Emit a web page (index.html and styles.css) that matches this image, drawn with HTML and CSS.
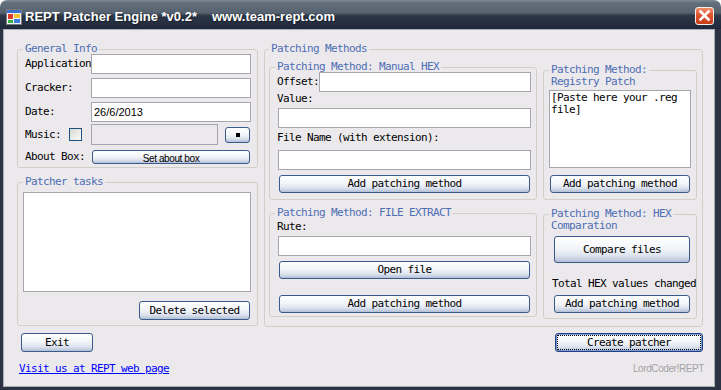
FILE: index.html
```html
<!DOCTYPE html>
<html lang="en">
<head>
  <meta charset="UTF-8" />
  <title>REPT Patcher Engine *v0.2*</title>
  <link rel="stylesheet" href="styles.css">
</head>
<body>
<div class="window">
  <div class="titlebar">
    <svg class="app-icon" width="16" height="16" viewBox="0 0 16 16">
      <rect x="0.5" y="0.5" width="15" height="15" fill="#f4f4f4" stroke="#7a7a7a"/>
      <rect x="1" y="1" width="14" height="3" fill="#3a6fd0"/>
      <rect x="2" y="5" width="5" height="5" fill="#e03a2a"/>
      <rect x="8" y="5" width="6" height="4" fill="#f2c232"/>
      <rect x="8" y="10" width="6" height="4" fill="#3d7fe0"/>
      <rect x="2" y="11" width="5" height="3" fill="#3cb04a"/>
    </svg>
    <span class="title">REPT Patcher Engine *v0.2*</span>
    <span class="title site">www.team-rept.com</span>
    <span class="close-btn">
      <svg width="17" height="16" viewBox="0 0 17 16">
        <path d="M4.5 3.5 L12.5 11.5 M12.5 3.5 L4.5 11.5" stroke="#fff" stroke-width="2.6" stroke-linecap="square" fill="none"/>
      </svg>
    </span>
  </div>

  <div class="frame">
    <div class="client">
      <div class="panels">
        <div class="left-col">
          <div class="group general">
            <div class="group-title">General Info</div>
            <div class="row"><span class="lbl">Application</span><input class="textbox" type="text"></div>
            <div class="row"><span class="lbl">Cracker:</span><input class="textbox" type="text"></div>
            <div class="row"><span class="lbl">Date:</span><input class="textbox" type="text" value="26/6/2013"></div>
            <div class="row music">
              <span class="lbl-short">Music:</span>
              <span class="check"></span>
              <input class="textbox off" type="text" disabled>
              <button class="btn btn-dot"><span class="dot"></span></button>
            </div>
            <div class="row about"><span class="lbl">About Box:</span><button class="btn btn-about">Set about box</button></div>
          </div>

          <div class="group tasks">
            <div class="group-title">Patcher tasks</div>
            <div class="listbox"></div>
            <button class="btn btn-delete">Delete selected</button>
          </div>
        </div>

        <div class="group methods">
          <div class="group-title">Patching Methods</div>
          <div class="methods-grid">
            <div class="group hex-manual">
              <div class="group-title">Patching Method: Manual HEX</div>
              <div class="row offset"><span class="lbl-short">Offset:</span><input class="textbox" type="text"></div>
              <div class="field-lbl value-lbl">Value:</div>
              <input class="textbox wide" type="text">
              <div class="field-lbl file-lbl">File Name (with extension):</div>
              <input class="textbox wide file-box" type="text">
              <button class="btn btn-full add-1">Add patching method</button>
            </div>

            <div class="group registry">
              <div class="group-title">Patching Method:<br>Registry Patch</div>
              <textarea class="regbox">[Paste here your .reg file]</textarea>
              <button class="btn btn-full add-2">Add patching method</button>
            </div>

            <div class="group extract">
              <div class="group-title">Patching Method: FILE EXTRACT</div>
              <div class="field-lbl rute-lbl">Rute:</div>
              <input class="textbox wide rute-box" type="text">
              <button class="btn btn-full open-btn">Open file</button>
              <button class="btn btn-full add-3">Add patching method</button>
            </div>

            <div class="group compare">
              <div class="group-title">Patching Method: HEX<br>Comparation</div>
              <button class="btn btn-compare">Compare files</button>
              <div class="field-lbl total-lbl">Total HEX values changed</div>
              <button class="btn btn-compare-add">Add patching method</button>
            </div>
          </div>
        </div>
      </div>

      <div class="actions">
        <button class="btn btn-exit">Exit</button>
        <button class="btn btn-create">Create patcher</button>
      </div>

      <div class="footer-row">
        <a class="site-link" href="#">Visit us at REPT web page</a>
        <span class="credit">LordCoder!REPT</span>
      </div>
    </div>
  </div>
</div>
</body>
</html>
```

FILE: styles.css
```css
* {
  box-sizing: border-box;
}

body {
  margin: 0;
  background: #fff;
  font-family: "DejaVu Sans Mono", "Liberation Mono", monospace;
  font-size: 11px;
  line-height: 12px;
  letter-spacing: -0.62px;
  color: #000;
}

.window {
  width: 721px;
  height: 390px;
  display: flex;
  flex-direction: column;
}

/* title bar */
.titlebar {
  flex: none;
  height: 29px;
  display: flex;
  align-items: center;
  padding: 4px 0 0 6px;
  border-radius: 7px 7px 0 0;
  background: linear-gradient(#7f8a96 0, #63707c 10%, #56626f 44%, #2d3747 54%, #1f283a 100%);
  color: #fff;
  font-family: "Liberation Sans", Arial, sans-serif;
  font-weight: bold;
  font-size: 13px;
  line-height: 15px;
  letter-spacing: 0;
  text-shadow: 1px 1px 0 rgba(0, 0, 0, 0.4);
}

.app-icon {
  margin-right: 3px;
}

.title {
  white-space: nowrap;
}

.site {
  margin-left: 15px;
}

.close-btn {
  margin: -2px 7px 0 auto;
  width: 19px;
  height: 18px;
  display: flex;
  align-items: center;
  justify-content: center;
  border: 1px solid #f4f0ee;
  border-radius: 3px;
  background: linear-gradient(#f0906c, #e0542e 45%, #c83b17);
}

/* window frame + client */
.frame {
  flex: 1;
  background: #2b3342;
  padding: 0 6px 3px 3px;
}

.client {
  height: 100%;
  border: 1px solid #a9aeb6;
  background: #ece9ed;
  padding: 19px 0 0 13px;
}

.panels {
  display: grid;
  grid-template-columns: 241px 439px;
  column-gap: 6px;
  align-items: start;
}

.left-col {
  display: flex;
  flex-direction: column;
  gap: 14px;
}

/* group boxes: the title sits over the top border */
.group {
  border: 1px solid #d2d0c6;
  border-radius: 3px;
}

.group-title {
  display: table;
  margin: -7px 0 -5px 0;
  padding: 0 2px;
  background: #ece9ed;
  color: #4d6db4;
  white-space: nowrap;
}

.general {
  padding: 0 6px 3px 7px;
}

.general .group-title {
  margin-left: -2px;
  margin-bottom: -1px;
}

.tasks {
  padding: 0 6px 5px 5px;
  display: flex;
  flex-direction: column;
}

.tasks .group-title {
  margin-bottom: 4px;
  align-self: flex-start;
}

.methods {
  padding: 0 5px 7px 4px;
}

.methods > .group-title {
  margin-bottom: 12px;
}

.methods-grid {
  display: grid;
  grid-template-columns: 268px 154px;
  column-gap: 6px;
  row-gap: 13px;
  align-items: start;
}

.hex-manual,
.extract {
  padding: 0 5px 6px 8px;
  display: flex;
  flex-direction: column;
}

.hex-manual .group-title,
.extract .group-title {
  margin-left: -3px;
  align-self: flex-start;
}

.hex-manual .group-title {
  margin-bottom: -1px;
}

.extract {
  padding-bottom: 3px;
}

.registry,
.compare {
  padding: 0 5px 6px 5px;
  display: flex;
  flex-direction: column;
}

.registry .group-title,
.compare .group-title {
  align-self: flex-start;
}

.registry {
  margin-top: 3px;
}

.compare {
  margin-top: 1px;
  padding-bottom: 5px;
}

/* rows and labels */
.row {
  display: flex;
  align-items: center;
  height: 20px;
}

.row + .row {
  margin-top: 4px;
}

.lbl {
  width: 66px;
  flex: none;
  overflow: hidden;
  white-space: nowrap;
}

.lbl-short {
  flex: none;
  white-space: nowrap;
}

.field-lbl {
  white-space: nowrap;
}

.textbox {
  height: 20px;
  flex: 1;
  min-width: 0;
  border: 1px solid #a7a6aa;
  background: #fff;
  padding: 0 2px;
  margin: 0;
  font-family: "Liberation Sans", Arial, sans-serif;
  font-size: 11px;
  letter-spacing: 0;
  color: #000;
  outline: none;
}

.textbox.off {
  flex: none;
  width: 127px;
  height: 21px;
  margin-left: 9px;
  background: transparent;
}

.music.row {
  margin-top: 2px;
  height: 21px;
}

.check {
  width: 13px;
  height: 13px;
  margin-left: 8px;
  border: 1px solid #1c5180;
  background: linear-gradient(135deg, #d8d8d2 0%, #fbfbfa 100%);
}

.about.row {
  margin-top: 5px;
  height: 14px;
}

.listbox {
  height: 100px;
  border: 1px solid #a7a6aa;
  background: #fff;
}

.offset .lbl-short {
  margin-left: -1px;
}

.value-lbl {
  margin: 1px 0 0 -1px;
}

.wide {
  flex: none;
  width: 100%;
  margin-top: 3px;
}

.file-lbl {
  margin: 4px 0 0 -1px;
}

.file-box {
  margin-top: 6px;
}

.rute-lbl {
  margin: 7px 0 0 -1px;
}

.rute-box {
  margin-top: 3px;
}

.regbox {
  margin-top: 7px;
  height: 78px;
  width: 100%;
  resize: none;
  overflow: hidden;
  border: 1px solid #a7a6aa;
  background: #fff;
  padding: 1px;
  font: inherit;
  letter-spacing: inherit;
  color: #000;
  outline: none;
}

.total-lbl {
  margin: 15px 0 0 3px;
}

/* buttons */
.btn {
  display: block;
  margin: 0;
  padding: 0;
  border: 1px solid #3a5a8c;
  border-radius: 3px;
  background: linear-gradient(#ffffff, #f3f5f9 45%, #dde3ee 75%, #b3bfd7);
  font: inherit;
  letter-spacing: inherit;
  color: #000;
  text-align: center;
  white-space: nowrap;
  cursor: pointer;
}

.btn-full {
  height: 18px;
  margin: 5px 1px 0 1px;
}

.add-3 {
  margin-top: 16px;
}

.add-2 {
  margin-top: 7px;
}

.btn-dot {
  width: 25px;
  height: 16px;
  margin-left: 7px;
  display: flex;
  align-items: center;
  justify-content: center;
}

.dot {
  width: 4px;
  height: 4px;
  background: #000;
}

.btn-about {
  width: 158px;
  height: 14px;
  margin-left: 1px;
  padding-top: 2px;
  overflow: hidden;
  font-family: "Liberation Sans", Arial, sans-serif;
  font-size: 10px;
  letter-spacing: -0.4px;
  line-height: 12px;
}

.btn-delete {
  align-self: flex-end;
  width: 111px;
  height: 19px;
  margin: 9px 1px 0 0;
}

.btn-compare {
  height: 27px;
  margin: 9px 1px 0 5px;
}

.btn-compare-add {
  height: 18px;
  margin: 5px 1px 0 5px;
}

/* bottom area */
.actions {
  display: flex;
  justify-content: space-between;
  margin-top: 6px;
  width: 686px;
}

.btn-exit {
  width: 72px;
  height: 19px;
  margin-left: 4px;
}

.btn-create {
  width: 148px;
  height: 19px;
  border-color: #1d3f86;
  box-shadow: inset 0 0 0 1px #7e9bd2;
  outline: 1px dotted #000;
  outline-offset: -3px;
}

.footer-row {
  display: flex;
  justify-content: space-between;
  align-items: flex-end;
  margin-top: 11px;
  width: 687px;
}

.site-link {
  margin-left: 2px;
  color: #0000ff;
  text-decoration: underline;
}

.credit {
  font-family: "Liberation Sans", Arial, sans-serif;
  font-size: 10px;
  letter-spacing: -0.4px;
  color: #a3a3a3;
  line-height: 12px;
}
```
